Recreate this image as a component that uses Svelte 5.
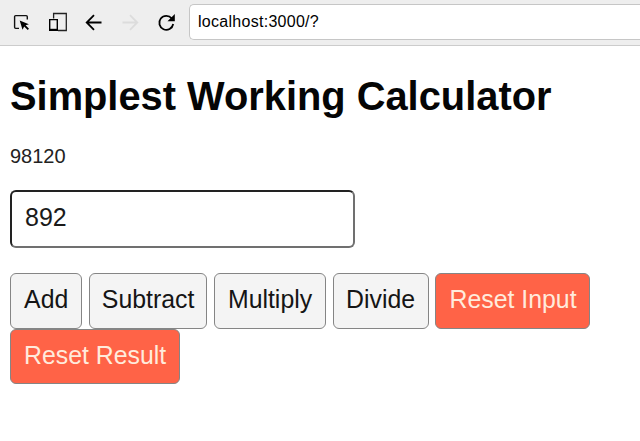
<script>
  let value = $state('892');
  let result = $state(98120);

  const operations = [
    { label: 'Add', width: 72.4, run: (a, b) => a + b },
    { label: 'Subtract', width: 118.7, run: (a, b) => a - b },
    { label: 'Multiply', width: 112.4, run: (a, b) => a * b },
    { label: 'Divide', width: 95.9, run: (a, b) => a / b }
  ];
</script>

<div class="browser">
  <svg class="icons" width="189" height="45" viewBox="0 0 189 45" fill="none">
    <path d="M19 28.4H15.7Q14.6 28.4 14.6 27.3V16.6Q14.6 15.6 15.7 15.6H26.2Q27.3 15.6 27.3 16.7V19.5" stroke="#111" stroke-width="1.4" />
    <path d="M19.7 20.4L28.9 24.2L25.6 25.3L29 28.8L27.7 30L24.2 26.6L22.5 29.8Z" fill="#000" />
    <path d="M53.6 18.5V13.5H66.3V30.5H58" stroke="#222" stroke-width="1.3" />
    <path d="M49.7 19.6H57.3V30.4H49.7Z" stroke="#000" stroke-width="1.4" />
    <path d="M49.5 29.7H57.5" stroke="#000" stroke-width="1.8" />
    <path d="M101.5 22.5H87M94 15.2L86.7 22.5L94 29.8" stroke="#000" stroke-width="1.8" />
    <path d="M122.5 22.5H137M130 15.2L137.3 22.5L130 29.8" stroke="#dcdcdc" stroke-width="1.8" />
    <path d="M171.8 18.5A7 7 0 1 0 173.2 24" stroke="#000" stroke-width="1.8" />
    <path d="M174.8 14V21.3H167.5Z" fill="#000" />
  </svg>
  <div class="address">localhost:3000/?</div>
</div>

<main>
  <h1>Simplest Working Calculator</h1>
  <p>{result}</p>
  <input type="text" bind:value />
  <div class="buttons">
    {#each operations as op}
      <button style:width="{op.width}px" onclick={() => (result = op.run(result, Number(value)))}>{op.label}</button>
    {/each}
    <button class="reset input-reset" onclick={() => (value = '')}>Reset Input</button>
    <button class="reset result-reset" onclick={() => (result = 0)}>Reset Result</button>
  </div>
</main>

<style>
  :global(body) {
    margin: 0;
    background: #fff;
    overflow: hidden;
  }
  .browser {
    box-sizing: border-box;
    height: 46px;
    display: flex;
    background: #eee;
    border-bottom: 1px solid #ccc;
  }
  .icons {
    flex: none;
  }
  .address {
    box-sizing: border-box;
    flex: 1;
    height: 36px;
    margin-top: 4px;
    padding-left: 8px;
    border: 1px solid #c6c6c6;
    border-right: 0;
    border-radius: 5px 0 0 5px;
    background: #fff;
    color: #000;
    font: 16px/34px 'Liberation Sans', Arial, sans-serif;
    letter-spacing: 0.28px;
  }
  main {
    padding: 26px 0 0 10px;
    font-family: 'Liberation Sans', Arial, sans-serif;
    color: #111;
  }
  h1 {
    margin: 0;
    font-size: 39.85px;
    line-height: 48px;
    color: #050505;
    white-space: nowrap;
  }
  p {
    margin: 25px 0 0;
    font-size: 20px;
    line-height: 23px;
    color: #222;
  }
  input {
    display: block;
    box-sizing: border-box;
    width: 345px;
    height: 58px;
    margin: 22px 0 25px;
    padding: 0 13px 4px;
    border: 2px solid;
    border-color: #222 #707070 #707070 #222;
    border-radius: 6px;
    outline: none;
    background: #fff;
    color: #1a1a1a;
    font: 25px 'Liberation Sans', Arial, sans-serif;
  }
  .buttons {
    display: flex;
    flex-wrap: wrap;
    column-gap: 6.4px;
    width: 600px;
  }
  button {
    box-sizing: border-box;
    height: 55.6px;
    padding: 0 0 1px;
    border: 1px solid #858585;
    border-radius: 6px;
    background: #f4f4f4;
    color: #151515;
    font: 24.85px 'Liberation Sans', Arial, sans-serif;
    white-space: nowrap;
  }
  .reset {
    background: #ff6347;
    color: #ffebdc;
  }
  .input-reset {
    width: 155.3px;
    padding-left: 1px;
  }
  .result-reset {
    width: 170.3px;
  }
</style>
